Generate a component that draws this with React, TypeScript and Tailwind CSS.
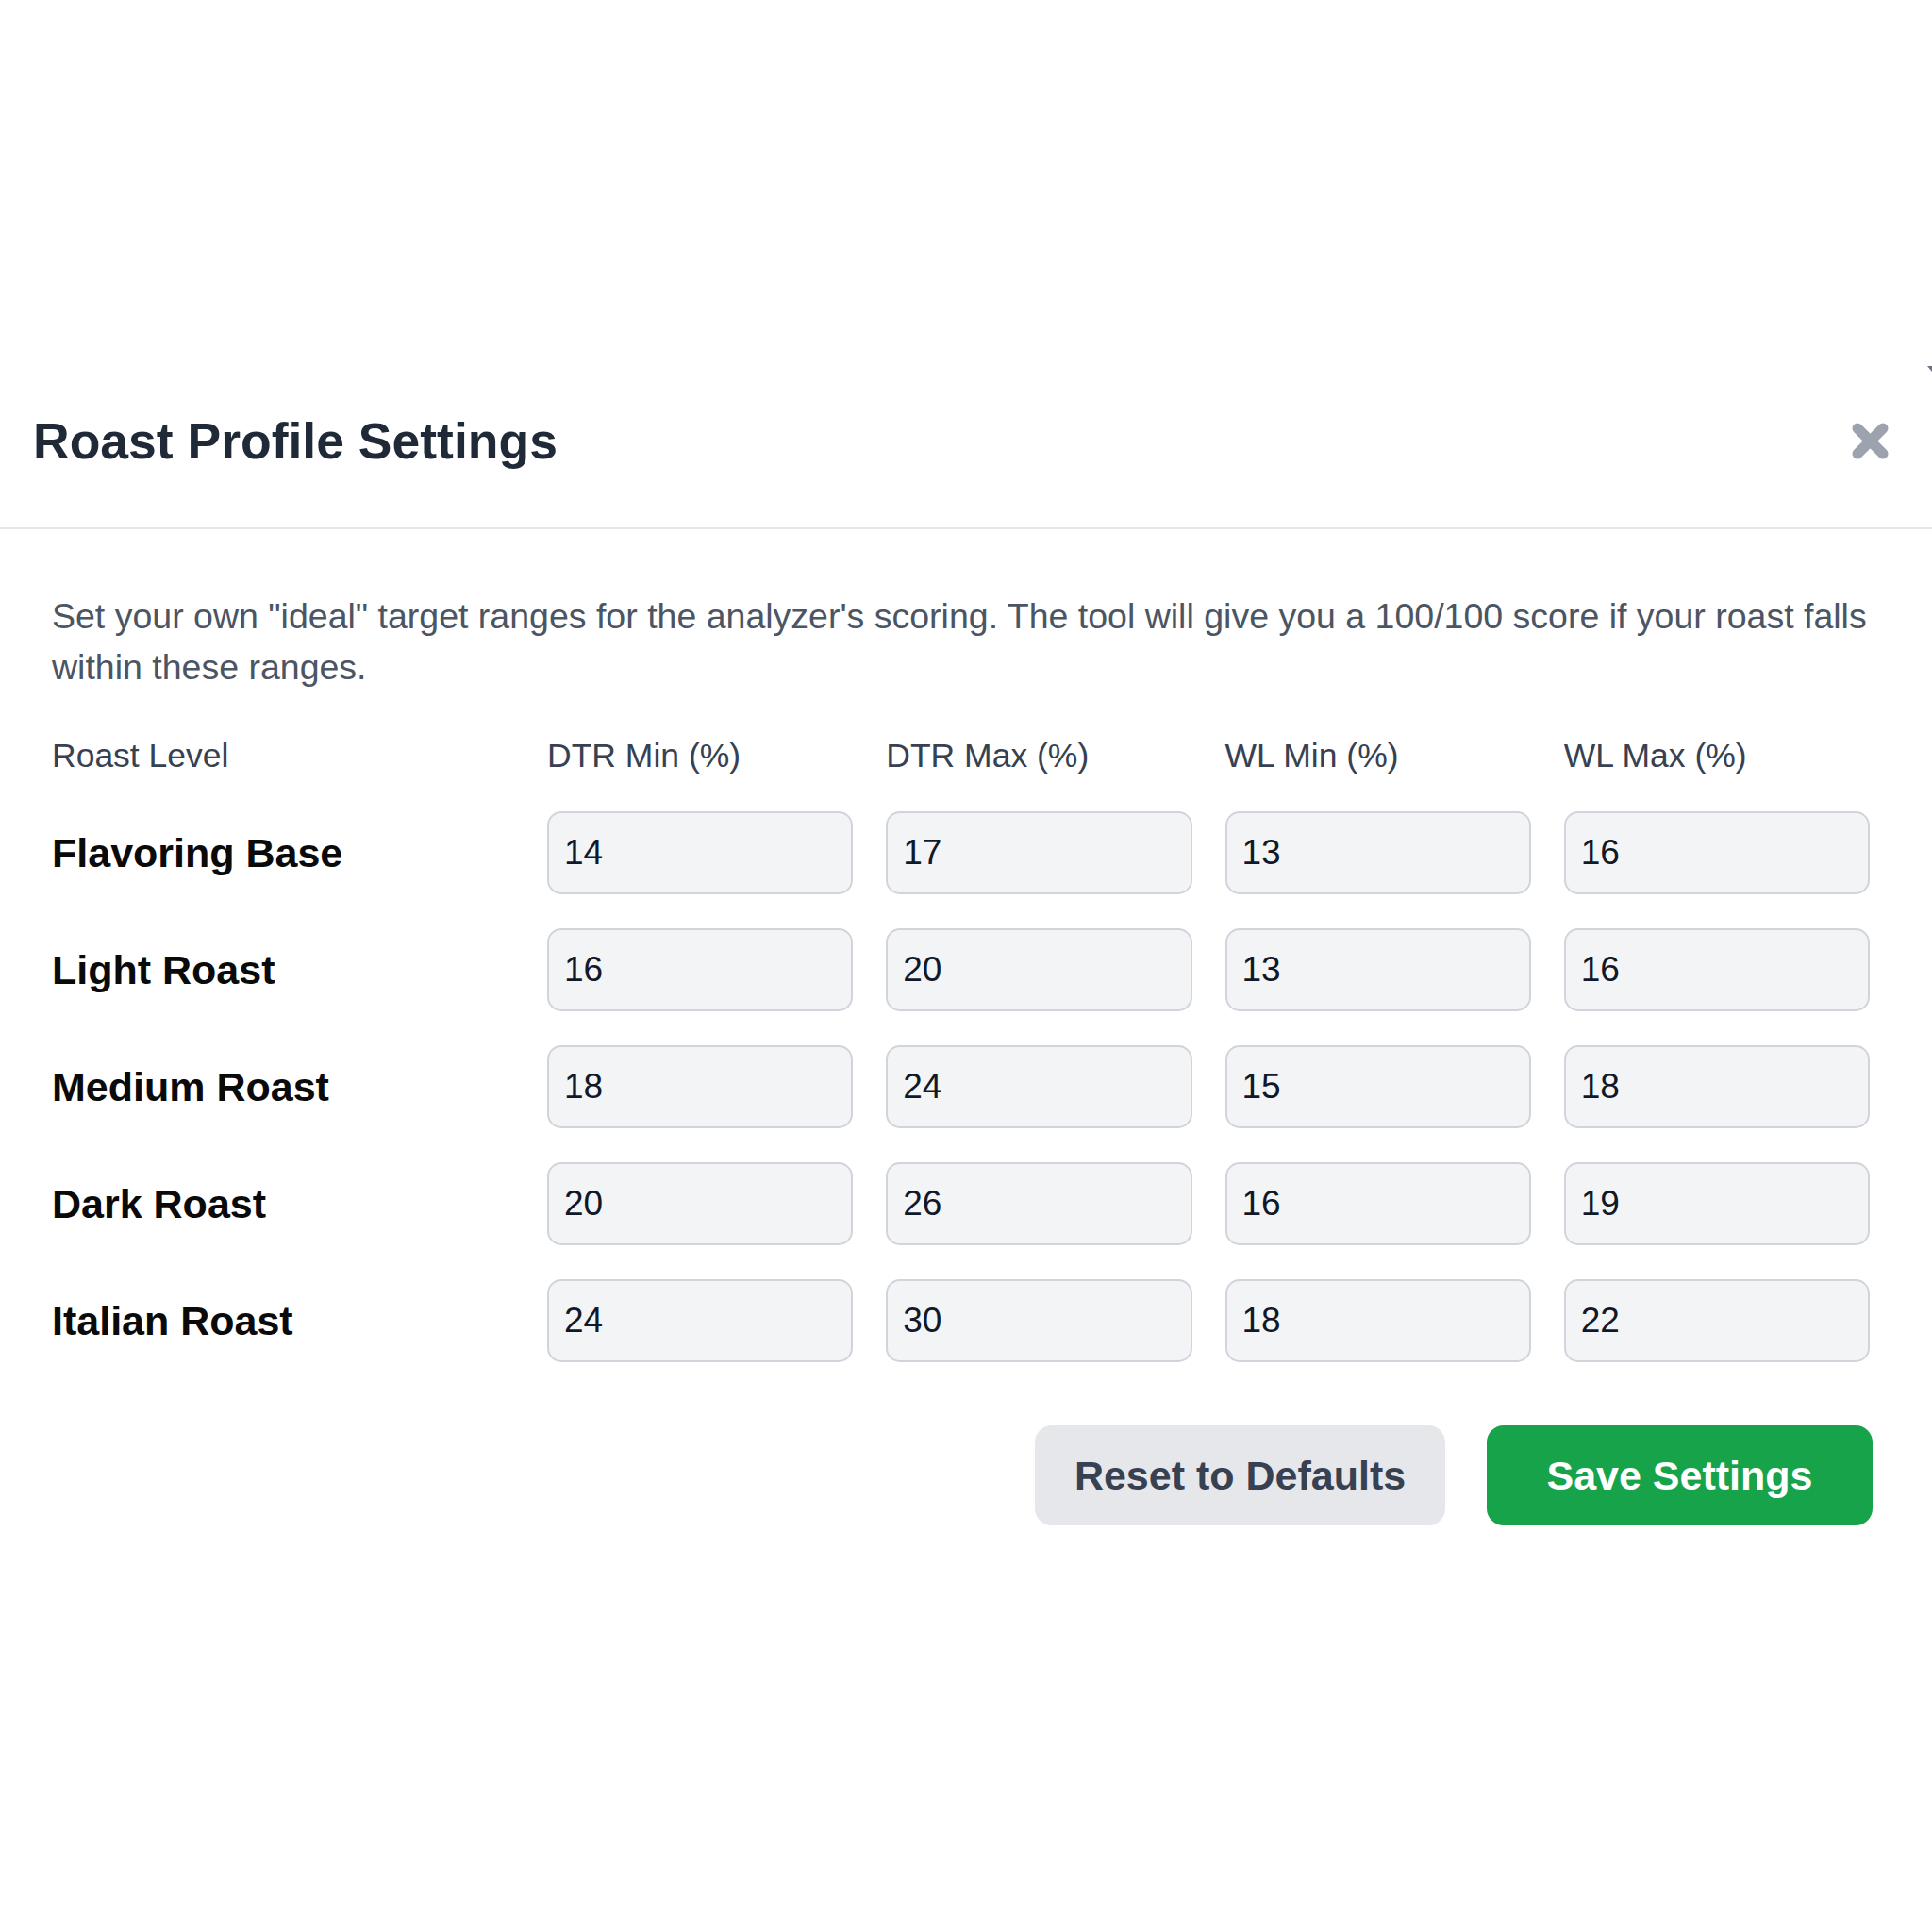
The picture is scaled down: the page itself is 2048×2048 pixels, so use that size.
import { useState } from "react";

type Row = { level: string; dtrMin: number; dtrMax: number; wlMin: number; wlMax: number };

const DEFAULTS: Row[] = [
  { level: "Flavoring Base", dtrMin: 14, dtrMax: 17, wlMin: 13, wlMax: 16 },
  { level: "Light Roast", dtrMin: 16, dtrMax: 20, wlMin: 13, wlMax: 16 },
  { level: "Medium Roast", dtrMin: 18, dtrMax: 24, wlMin: 15, wlMax: 18 },
  { level: "Dark Roast", dtrMin: 20, dtrMax: 26, wlMin: 16, wlMax: 19 },
  { level: "Italian Roast", dtrMin: 24, dtrMax: 30, wlMin: 18, wlMax: 22 },
];

const FIELDS = ["dtrMin", "dtrMax", "wlMin", "wlMax"] as const;

function CloseIcon() {
  return (
    <svg width="41" height="41" viewBox="0 0 41 41" aria-hidden="true">
      <g stroke="#9ca3af" strokeWidth="11" strokeLinecap="round">
        <line x1="7" y1="7" x2="34" y2="34" />
        <line x1="34" y1="7" x2="7" y2="34" />
      </g>
    </svg>
  );
}

export default function App() {
  const [rows, setRows] = useState<Row[]>(DEFAULTS);

  const update = (i: number, key: (typeof FIELDS)[number], v: string) => {
    setRows((prev) => prev.map((r, j) => (j === i ? { ...r, [key]: Number(v) } : r)));
  };

  return (
    <div className="relative min-h-screen bg-white font-['Liberation_Sans',Arial,sans-serif]">
      {/* scroll hint at the edge */}
      <span className="absolute right-0 top-[388px] h-[6px] w-[5px] bg-[#6b7280] [clip-path:polygon(0_0,100%_0,100%_100%)]" />

      <div className="pt-[380px]">
        {/* ── header ─────────────────────────────────────────── */}
        <div className="flex items-center justify-between border-b-2 border-[#e5e7eb] pl-[35px] pr-[45px] pt-[52px] pb-[56px]">
          <h2 className="text-[53.5px] font-bold leading-[71px] text-[#1f2937]">Roast Profile Settings</h2>
          <button type="button" className="flex h-[41px] w-[41px] items-center justify-center">
            <CloseIcon />
          </button>
        </div>

        {/* ── body ───────────────────────────────────────────── */}
        <div className="pl-[55px] pr-[66px] pt-[66px]">
          <p className="text-[37.5px] leading-[53.5px] text-[#4b5563]">
            Set your own "ideal" target ranges for the analyzer's scoring. The tool will give you a 100/100 score if
            your roast falls within these ranges.
          </p>

          <div className="mt-[42px] grid grid-cols-[490px_1fr_1fr_1fr_1fr] gap-x-[35px] text-[35.5px] font-medium leading-[50px] text-[#374151]">
            <div>Roast Level</div>
            <div>DTR Min (%)</div>
            <div>DTR Max (%)</div>
            <div>WL Min (%)</div>
            <div>WL Max (%)</div>
          </div>

          <div className="mt-[34px] grid grid-cols-[490px_1fr_1fr_1fr_1fr] gap-x-[35px] gap-y-[36px]">
            {rows.map((r, i) => (
              <div key={r.level} className="contents">
                <div className="flex items-center text-[43px] font-bold text-[#0a0a0a]">{r.level}</div>
                {FIELDS.map((f) => (
                  <input
                    key={f}
                    type="number"
                    value={r[f]}
                    onChange={(e) => update(i, f, e.target.value)}
                    className="h-[88px] w-full rounded-[15px] border-2 border-[#d1d5db] bg-[#f3f4f6] pl-[16px] text-[37px] text-[#111827] outline-none [appearance:textfield] [&::-webkit-inner-spin-button]:appearance-none [&::-webkit-outer-spin-button]:appearance-none"
                  />
                ))}
              </div>
            ))}
          </div>

          <div className="mt-[67px] flex justify-end gap-[44px]">
            <button
              type="button"
              onClick={() => setRows(DEFAULTS)}
              className="h-[106px] w-[435px] rounded-[18px] bg-[#e5e7eb] text-[43px] font-bold text-[#374151]"
            >
              Reset to Defaults
            </button>
            <button
              type="button"
              className="-mr-[3px] h-[106px] w-[409px] rounded-[18px] bg-[#16a34a] text-[43px] font-bold text-white"
            >
              Save Settings
            </button>
          </div>
        </div>
      </div>
    </div>
  );
}
